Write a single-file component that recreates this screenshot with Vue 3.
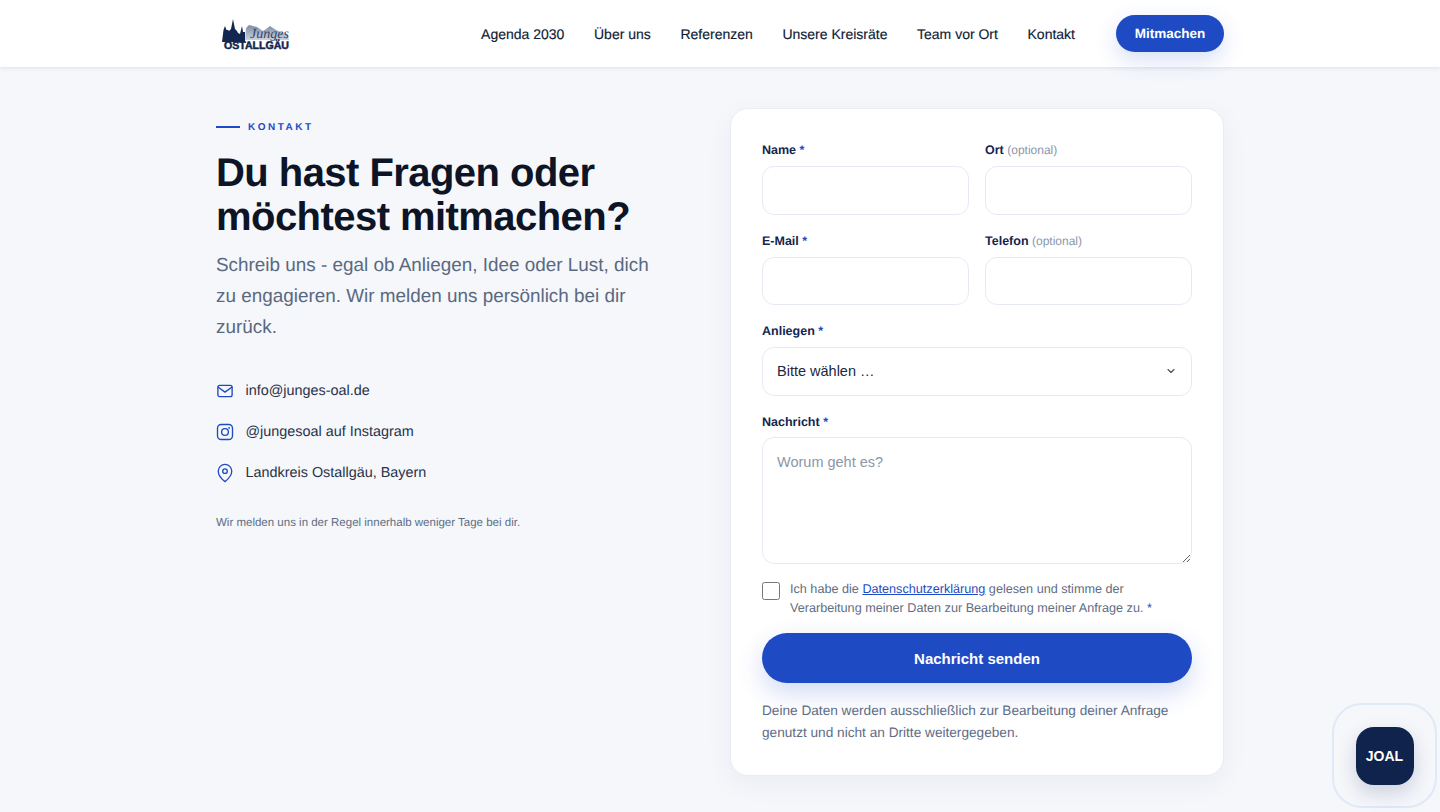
<template>
  <div class="page">
    <!-- Kopfzeile -->
    <header class="topbar">
      <div class="topbar-inner">
        <a class="logo" href="#" aria-label="Junges Ostallgäu">
          <svg width="80" height="40" viewBox="0 0 80 40">
            <defs>
              <linearGradient id="berge" x1="0" y1="0" x2="0" y2="1">
                <stop offset="0" stop-color="#7d8ca4" />
                <stop offset="1" stop-color="#ccd3de" />
              </linearGradient>
            </defs>
            <path d="M29 26 L30 14 L33 11 L41 13 L47 17 L50 15 L54 12 L60 16 L72 21 L73 26 Z" fill="url(#berge)" />
            <path d="M6 28 L7.500 16 L9 12 L10.500 16 L12 16 L13 17 L15 15 L17 5 L19 15 L21 17 L22 19 L24 20 L26 12 L27 18 L29 18 L29 28 Z" fill="#12264f" />
            <text x="34" y="24" class="logo-script" textLength="39" lengthAdjust="spacing">Junges</text>
            <text x="8" y="35" class="logo-word" textLength="65" lengthAdjust="spacingAndGlyphs">OSTALLGÄU</text>
          </svg>
        </a>
        <nav class="nav">
          <a v-for="item in navItems" :key="item" href="#">{{ item }}</a>
        </nav>
        <a class="nav-cta" href="#">Mitmachen</a>
      </div>
    </header>

    <main class="contact">
      <!-- Linke Spalte -->
      <section class="intro">
        <div class="eyebrow"><span class="eyebrow-line"></span>KONTAKT</div>
        <h1>Du hast Fragen oder möchtest mitmachen?</h1>
        <p class="lead">Schreib uns - egal ob Anliegen, Idee oder Lust, dich zu engagieren. Wir melden uns persönlich bei dir zurück.</p>

        <ul class="channels">
          <li>
            <svg width="18" height="18" viewBox="0 0 24 24" fill="none" stroke="#1e4bc4" stroke-width="1.800" stroke-linecap="round" stroke-linejoin="round">
              <rect x="2.500" y="4.500" width="19" height="15" rx="2.500" />
              <path d="M3 7l9 6.500L21 7" />
            </svg>
            <span>info@junges-oal.de</span>
          </li>
          <li>
            <svg width="18" height="18" viewBox="0 0 24 24" fill="none" stroke="#1e4bc4" stroke-width="1.800" stroke-linecap="round" stroke-linejoin="round">
              <rect x="2" y="2" width="20" height="20" rx="5" />
              <circle cx="12" cy="12" r="4.500" />
              <path d="M17.500 6.500h.01" stroke-width="2.400" />
            </svg>
            <span>@jungesoal auf Instagram</span>
          </li>
          <li>
            <svg width="18" height="20" viewBox="0 0 24 26" fill="none" stroke="#1e4bc4" stroke-width="1.800" stroke-linecap="round" stroke-linejoin="round">
              <path d="M12 24.500s-9-7.200-9-14a9 9 0 0 1 18 0C21 17.300 12 24.500 12 24.500z" />
              <circle cx="12" cy="10.500" r="3" />
            </svg>
            <span>Landkreis Ostallgäu, Bayern</span>
          </li>
        </ul>

        <p class="hint">Wir melden uns in der Regel innerhalb weniger Tage bei dir.</p>
      </section>

      <!-- Formular -->
      <form class="card" @submit.prevent>
        <div class="row">
          <label class="field">
            <span class="label">Name <em>*</em></span>
            <input type="text" />
          </label>
          <label class="field">
            <span class="label">Ort <small>(optional)</small></span>
            <input type="text" />
          </label>
        </div>
        <div class="row">
          <label class="field">
            <span class="label">E-Mail <em>*</em></span>
            <input type="email" />
          </label>
          <label class="field">
            <span class="label">Telefon <small>(optional)</small></span>
            <input type="tel" />
          </label>
        </div>
        <label class="field">
          <span class="label">Anliegen <em>*</em></span>
          <span class="select-wrap">
            <select>
              <option>Bitte wählen …</option>
            </select>
            <svg class="chevron" width="10" height="10" viewBox="0 0 10 10" fill="none" stroke="#444c5a" stroke-width="1.100" stroke-linecap="round" stroke-linejoin="round">
              <path d="M2 3.500L5 6.500L8 3.500" />
            </svg>
          </span>
        </label>
        <label class="field">
          <span class="label">Nachricht <em>*</em></span>
          <textarea placeholder="Worum geht es?"></textarea>
        </label>
        <label class="consent">
          <input type="checkbox" />
          <span>Ich habe die <a href="#">Datenschutzerklärung</a> gelesen und stimme der Verarbeitung meiner Daten zur Bearbeitung meiner Anfrage zu. <em>*</em></span>
        </label>
        <button type="submit" class="submit">Nachricht senden</button>
        <p class="note">Deine Daten werden ausschließlich zur Bearbeitung deiner Anfrage genutzt und nicht an Dritte weitergegeben.</p>
      </form>
    </main>

    <!-- Schwebender Button -->
    <div class="float-ring">
      <button class="float-btn">JOAL</button>
    </div>
  </div>
</template>

<script setup>
const navItems = ['Agenda 2030', 'Über uns', 'Referenzen', 'Unsere Kreisräte', 'Team vor Ort', 'Kontakt']
</script>

<style>
html, body { margin: 0; background: #f5f7fb; }
</style>

<style scoped>
.page {
  min-height: 812px;
  background: #f5f7fb;
  font-family: "Liberation Sans", Arial, sans-serif;
  text-rendering: geometricPrecision;
  color: #0f1b33;
  overflow: hidden;
  position: relative;
}

/* Kopfzeile */
.topbar {
  height: 67px;
  background: #fff;
  box-shadow: 0 1px 4px rgba(15, 35, 80, 0.1);
}
.topbar-inner {
  width: 1008px;
  height: 100%;
  margin: 0 auto;
  display: flex;
  align-items: center;
}
.logo { display: block; height: 40px; margin-top: 1px; }
.logo-script { font-family: "Liberation Serif", serif; font-style: italic; font-size: 14px; fill: #33456a; }
.logo-word { font-family: "Liberation Sans", sans-serif; font-weight: 700; font-size: 11px; fill: #12264f; stroke: #12264f; stroke-width: 0.500px; }
.nav {
  margin-left: auto;
  display: flex;
  gap: 29.600px;
}
.nav a {
  font-size: 14px;
  -webkit-text-stroke: 0.150px #0f1b33;
  color: #0f1b33;
  text-decoration: none;
}
.nav-cta {
  margin-left: 41px;
  width: 108px;
  height: 37px;
  border-radius: 19px;
  background: #1e4bc4;
  color: #fff;
  font-size: 13.500px;
  font-weight: 700;
  display: flex;
  align-items: center;
  justify-content: center;
  text-decoration: none;
  box-shadow: 0 8px 22px rgba(30, 75, 196, 0.18);
}

/* Inhalt */
.contact {
  width: 1008px;
  margin: 0 auto;
  padding-top: 41px;
  display: flex;
  justify-content: space-between;
  align-items: flex-start;
}
.intro { width: 440px; }
.eyebrow {
  display: flex;
  align-items: center;
  gap: 8px;
  height: 18px;
  margin-top: 10px;
  font-size: 10px;
  font-weight: 700;
  letter-spacing: 2.500px;
  color: #1e4bc4;
}
.eyebrow-line { width: 24px; height: 2px; background: #1e4bc4; }
h1 {
  margin: 14.500px 0 0;
  font-size: 40px;
  line-height: 44px;
  font-weight: 700;
  letter-spacing: -0.550px;
  color: #0c1425;
}
.lead {
  margin: 11.500px 0 0;
  font-size: 18.900px;
  line-height: 31px;
  color: #5a6980;
}
.channels {
  list-style: none;
  margin: 37px 0 0;
  padding: 0;
  display: flex;
  flex-direction: column;
  gap: 20px;
}
.channels li {
  display: flex;
  align-items: center;
  gap: 11.500px;
  height: 21px;
  font-size: 14.400px;
  color: #27324a;
}
.hint {
  margin: 31.500px 0 0;
  font-size: 11.500px;
  line-height: 16px;
  color: #5f6d83;
}

/* Formular */
.card {
  box-sizing: border-box;
  width: 494px;
  height: 668px;
  padding: 33px 31px 0;
  background: #fff;
  border: 1px solid #e8ecf4;
  border-radius: 18px;
  box-shadow: 0 8px 28px rgba(15, 35, 80, 0.05);
}
.row {
  display: grid;
  grid-template-columns: 207px 207px;
  gap: 16px;
}
.field { display: flex; flex-direction: column; margin-bottom: 18px; }
.label {
  display: block;
  height: 16px;
  line-height: 16px;
  margin-bottom: 8px;
  font-size: 12.500px;
  font-weight: 700;
  color: #12264f;
}
.label em, .consent em { font-style: normal; color: #1e4bc4; }
.label small { font-size: 12px; font-weight: 400; color: #8b97aa; }
input[type="text"], input[type="email"], input[type="tel"], select, textarea {
  box-sizing: border-box;
  display: block;
  width: 100%;
  height: 48.600px;
  padding: 0 14px;
  background: #fff;
  border: 1px solid #e6eaf2;
  border-radius: 12px;
  font-family: inherit;
  font-size: 14.500px;
  color: #1b2740;
  outline: none;
}
select { appearance: none; }
.select-wrap { position: relative; display: block; }
.chevron { position: absolute; right: 16px; top: 19px; pointer-events: none; }
textarea {
  height: 127px;
  margin-top: -0.800px;
  padding: 14px 14px;
  line-height: 20px;
}
textarea::placeholder { color: #8b97aa; }
.consent {
  display: flex;
  gap: 10px;
  margin-top: -1.600px;
  font-size: 12.650px;
  line-height: 19px;
  color: #5f6d83;
}
.consent input {
  appearance: none;
  box-sizing: border-box;
  flex: none;
  width: 18px;
  height: 18px;
  margin: 1.500px 0 0;
  background: #fff;
  border: 1px solid #767676;
  border-radius: 2.500px;
}
.consent a { color: #1e4bc4; }
.submit {
  display: block;
  width: 100%;
  height: 50px;
  margin-top: 15px;
  border: none;
  border-radius: 25px;
  background: #1e4bc4;
  color: #fff;
  font-family: inherit;
  font-size: 15px;
  font-weight: 700;
  box-shadow: 0 10px 26px rgba(30, 75, 196, 0.2);
}
.note {
  margin: 16.500px 0 0;
  font-size: 13.650px;
  line-height: 22px;
  color: #5f6d83;
}

/* Schwebender Button */
.float-ring {
  position: absolute;
  left: 1332px;
  top: 703px;
  box-sizing: border-box;
  width: 105px;
  height: 105px;
  border: 2px solid #e0e9f8;
  border-radius: 30px;
  display: flex;
  align-items: center;
  justify-content: center;
}
.float-btn {
  width: 58px;
  height: 58px;
  border: none;
  border-radius: 18px;
  background: #10234d;
  color: #fff;
  font-family: inherit;
  font-size: 14px;
  font-weight: 700;
  box-shadow: 0 8px 20px rgba(15, 35, 80, 0.18);
}
</style>
